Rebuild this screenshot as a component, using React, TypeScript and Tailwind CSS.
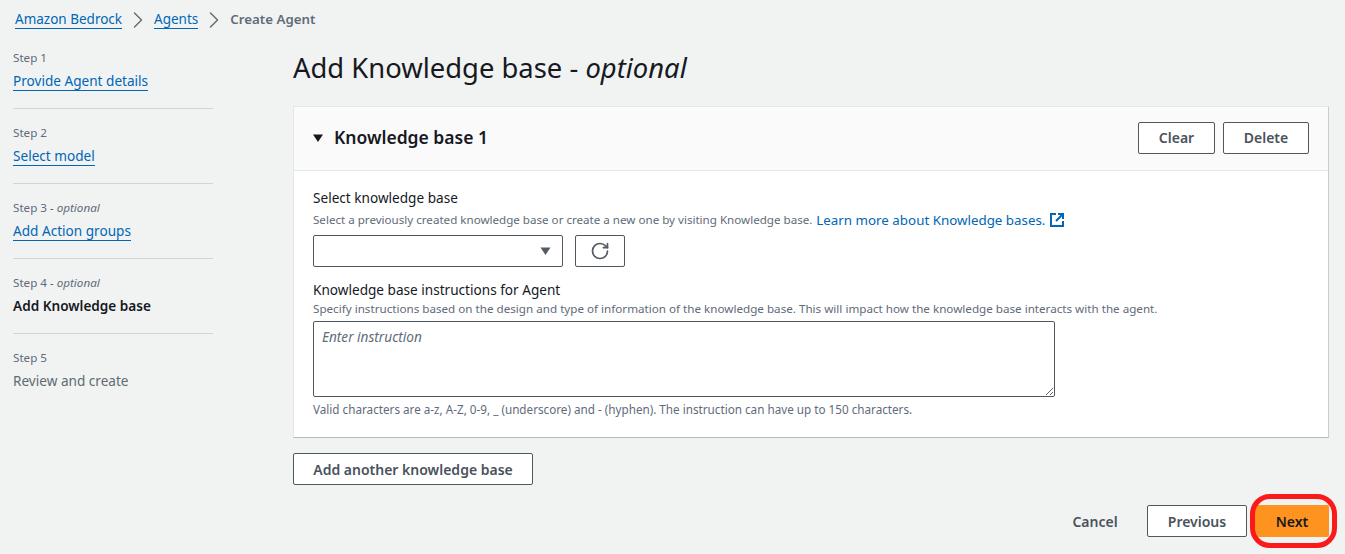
import React from 'react';
import { ChevronRight, RotateCw } from 'lucide-react';

const steps = [
  { label: 'Step 1', title: 'Provide Agent details', state: 'link' },
  { label: 'Step 2', title: 'Select model', state: 'link' },
  { label: 'Step 3', optional: true, title: 'Add Action groups', state: 'link' },
  { label: 'Step 4', optional: true, title: 'Add Knowledge base', state: 'active' },
  { label: 'Step 5', title: 'Review and create', state: 'disabled' },
];

const Triangle: React.FC<{ className: string }> = ({ className }) => (
  <svg viewBox="0 0 10 8" className={className} fill="currentColor">
    <path d="M0 0.5h10L5 8z" />
  </svg>
);

const ExternalIcon: React.FC = () => (
  <svg viewBox="0 0 14 14" className="w-[14px] h-[14px] ml-[5px] text-[#0066b5]" fill="none" stroke="currentColor" strokeWidth="2">
    <path d="M6 1H1v12h12V8" />
    <path d="M8 1h5v5M13 1L6 8" />
  </svg>
);

const Crumb: React.FC = () => (
  <ChevronRight className="w-[28px] h-[28px] -my-[4px] mx-[2px] text-[#687078]" strokeWidth={1.3} />
);

const Steps: React.FC = () => (
  <nav className="w-[200px] ml-[13px] -mt-[1px] shrink-0">
    {steps.map((step, i) => (
      <div
        key={step.label}
        className={`${i === 0 ? 'h-[60px]' : 'h-[75px]'} ${i < steps.length - 1 ? 'border-b border-[#d1d5d6]' : ''}`}
      >
        <div className={`text-[11.65px] leading-[16px] text-[#5f6b7a] ${i === 0 ? 'pt-[1px]' : 'pt-[16px]'} box-content`}>
          {step.label}
          {step.optional && <span className="italic"> - optional</span>}
        </div>
        <div className="mt-[6px] text-[13.6px] leading-[18px]">
          {step.state === 'link' && (
            <a className="text-[#0066b5] border-b border-[#0066b5]">{step.title}</a>
          )}
          {step.state === 'active' && <span className="font-semibold text-[#16191f]">{step.title}</span>}
          {step.state === 'disabled' && <span className="text-[#5f6b6f]">{step.title}</span>}
        </div>
      </div>
    ))}
  </nav>
);

const OutlineButton: React.FC<{ className: string; children: React.ReactNode }> = ({ className, children }) => (
  <button className={`h-[32px] bg-white border border-[#4f5761] rounded-[2px] text-[14px] font-semibold text-[#4a525c] flex items-center justify-center ${className}`}>
    {children}
  </button>
);

const KnowledgeBaseCard: React.FC = () => (
  <section className="mt-[20px] bg-white border border-[#e4e7e8] border-r-[#c9cdd0] border-b-[#b4b9bd]">
    <header className="h-[64px] bg-[#fafafa] border-b border-[#e4e7e8] pl-[19px] pr-[19px] pb-[2px] flex items-center justify-between">
      <div className="flex items-center">
        <Triangle className="w-[10px] h-[8px] text-[#16191f] mr-[11px]" />
        <h2 className="text-[17.5px] font-semibold text-[#16191f]">Knowledge base 1</h2>
      </div>
      <div className="flex gap-[8px]">
        <OutlineButton className="w-[77px]">Clear</OutlineButton>
        <OutlineButton className="w-[86px]">Delete</OutlineButton>
      </div>
    </header>
    <div className="pl-[19px] pt-[18px] h-[266px]">
      <div className="text-[13.6px] leading-[18px] text-[#16191f]">Select knowledge base</div>
      <div className="mt-[5px] flex items-center text-[11.6px] leading-[16px] text-[#5f6b7a]">
        <span>Select a previously created knowledge base or create a new one by visiting Knowledge base.</span>
        <a className="ml-[4px] text-[13.35px] text-[#0066b5]">Learn more about Knowledge bases.</a>
        <ExternalIcon />
      </div>
      <div className="mt-[7px] flex gap-[12px]">
        <div className="w-[250px] h-[32px] bg-white border border-[#4f5761] rounded-[2px] flex items-center justify-end pr-[11px]">
          <Triangle className="w-[11px] h-[8px] text-[#545b64]" />
        </div>
        <OutlineButton className="w-[50px]">
          <RotateCw className="w-[20px] h-[20px] text-[#545b64]" strokeWidth={2} />
        </OutlineButton>
      </div>
      <div className="mt-[14px] text-[13.6px] leading-[18px] text-[#16191f]">Knowledge base instructions for Agent</div>
      <div className="mt-[2px] text-[11.65px] leading-[16px] text-[#5f6b7a]">
        Specify instructions based on the design and type of information of the knowledge base. This will impact how the knowledge base interacts with the agent.
      </div>
      <textarea
        className="block mt-[4px] w-[742px] h-[76px] bg-white border border-[#4f5761] rounded-[2px] px-[8px] py-[6px] text-[13.6px] leading-[18px] italic placeholder:text-[#5f6b7a] outline-none"
        placeholder="Enter instruction"
      />
      <div className="mt-[4px] text-[11.7px] leading-[16px] text-[#5f6b7a]">
        Valid characters are a-z, A-Z, 0-9, _ (underscore) and - (hyphen). The instruction can have up to 150 characters.
      </div>
    </div>
  </section>
);

const App: React.FC = () => (
  <div className="h-[554px] w-[1345px] overflow-hidden bg-[#f1f3f3] font-['Noto_Sans','Open_Sans',sans-serif]">
    {/* Breadcrumbs */}
    <div className="h-[50px] pl-[15px] pt-[10px] flex items-start text-[13.5px] leading-[18px]">
      <a className="text-[#0066b5] border-b border-[#0066b5]">Amazon Bedrock</a>
      <Crumb />
      <a className="text-[#0066b5] border-b border-[#0066b5]">Agents</a>
      <Crumb />
      <span className="text-[13.3px] font-semibold text-[#5f6b7a]">Create Agent</span>
    </div>

    <div className="flex">
      <Steps />
      <main className="ml-[80px] w-[1036px]">
        <h1 className="text-[27.4px] leading-[36px] text-[#16191f]">
          Add Knowledge base - <span className="italic">optional</span>
        </h1>
        <KnowledgeBaseCard />
        <OutlineButton className="mt-[15px] w-[240px]">Add another knowledge base</OutlineButton>
        <div className="mt-[20px] flex items-center justify-end gap-[8px]">
          <button className="w-[88px] h-[32px] text-[14px] font-semibold text-[#4a525c]">Cancel</button>
          <OutlineButton className="w-[100px]">Previous</OutlineButton>
          <div className="relative">
            <button className="w-[74px] h-[32px] bg-[#ff9320] rounded-[2px] text-[14px] font-semibold text-[#16191f]">Next</button>
            {/* Red highlight drawn over the button */}
            <div className="absolute -left-[5px] -top-[11px] -right-[8px] -bottom-[11px] border-[5px] border-[#fb1a1a] rounded-[20px]" />
          </div>
        </div>
      </main>
    </div>
  </div>
);

export default App;
